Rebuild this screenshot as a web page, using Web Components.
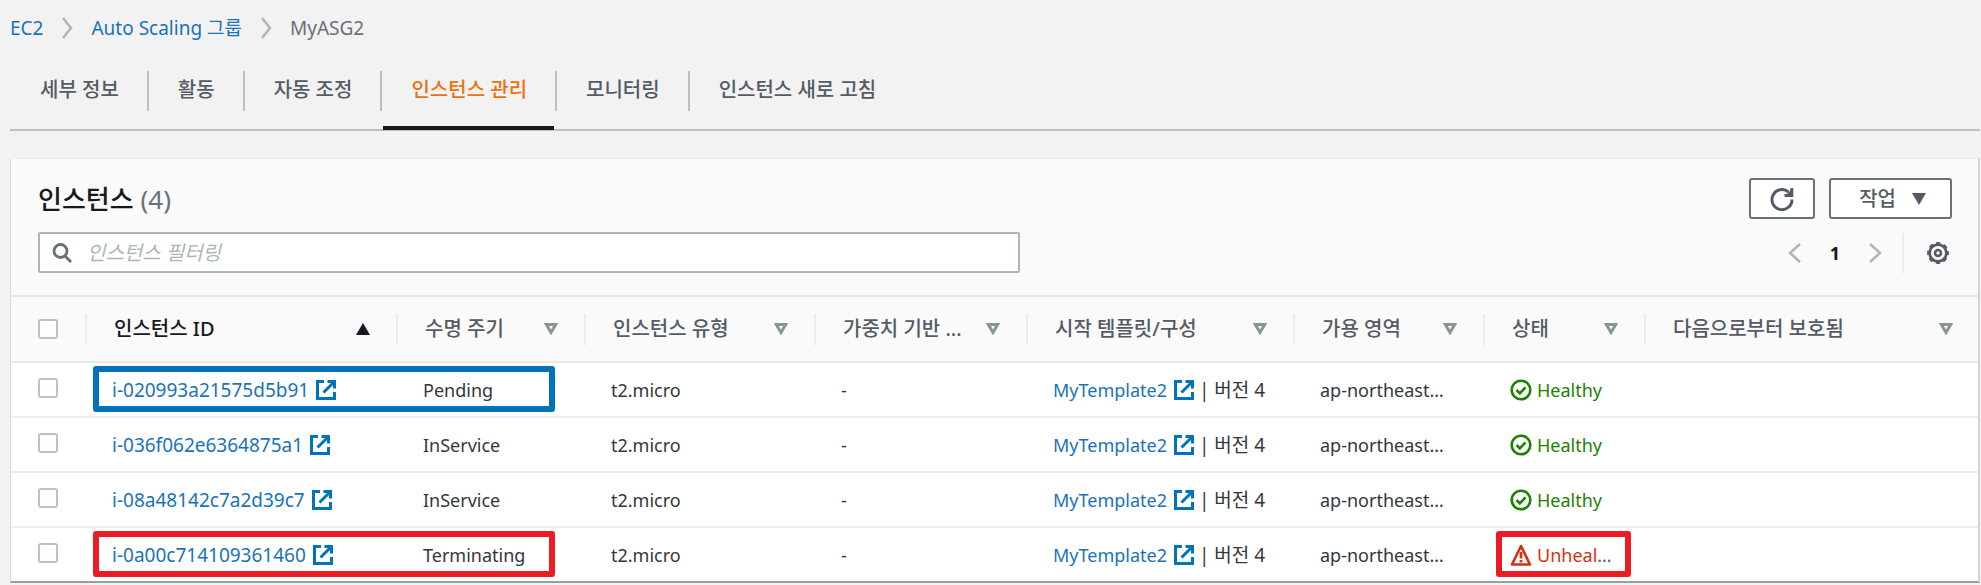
<!DOCTYPE html>
<html lang="ko">
<head>
  <meta charset="utf-8">
  <title>MyASG2 | EC2</title>
  <style>
    body {
      margin: 0;
      background: #f2f2f2;
      color: #33373c;
      font: 20px/28px "Noto Sans", "Noto Sans CJK KR", sans-serif;
      --link: #1a73b9;
      --muted: #545b64;
      --line: #eaeded;
      --edge: #aab7b8;
    }

    main {
      padding: 14px 1px 0 10px;
    }
  </style>

  <template id="crumbs.tpl">
    <style>
      :host { display: block; }
      nav { display: flex; align-items: center; gap: 18px; font-size: 19px; }
      ::slotted(a) { color: var(--link); text-decoration: none; }
      ::slotted(span) { color: #687078; }
      ::slotted(ui-icon) { color: var(--edge); }
    </style>
    <nav aria-label="breadcrumb"><slot></slot></nav>
  </template>

  <template id="tabs.tpl">
    <style>
      :host { display: block; margin-top: 18px; border-bottom: 2px solid #b9c2c3; }
      div { display: flex; padding-left: 1px; }
    </style>
    <div role="tablist"><slot></slot></div>
  </template>

  <template id="tab.tpl">
    <style>
      :host { display: flex; padding: 11px 0 0; }
      button {
        height: 59px;
        margin: 0 1px -1px 1px;
        padding: 0 27px 18px 28px;
        border: 0;
        border-bottom: 4px solid transparent;
        background: none;
        color: var(--muted);
        font: inherit;
        font-weight: 500;
        white-space: nowrap;
      }
      i { width: 2px; height: 40px; background: #b7c1c2; }
      :host([active]) button { color: #ec7211; border-bottom-color: #16191f; }
      :host([last]) i { display: none; }
    </style>
    <button role="tab"><slot></slot></button><i></i>
  </template>

  <template id="button.tpl">
    <style>
      :host { display: inline-flex; }
      button {
        display: flex;
        align-items: center;
        justify-content: center;
        gap: 16px;
        height: 41px;
        padding: 0 19px;
        border: 2px solid #687078;
        border-radius: 3px;
        background: #fff;
        color: var(--muted);
        font: inherit;
        font-weight: 500;
      }
      :host([wide]) button { padding: 0 24px 0 28px; }
      :host([plain]) button { height: 40px; padding: 0; border: 0; background: none; }
      :host([dim]) button { color: var(--edge); }
    </style>
    <button><slot></slot></button>
  </template>

  <template id="panel.tpl">
    <style>
      :host {
        display: block;
        margin-top: 27px;
        background: #fafafa;
        border: 1px solid #d9dddd;
        border-top-color: #eaeded;
        border-right: 2px solid #d0d5d6;
        border-bottom: 2px solid #95a0a1;
      }
      header { padding: 19px 26px 22px 27px; }
      .row { display: flex; align-items: center; justify-content: space-between; }
      .row + .row { margin-top: 13px; }
      h2 { margin: 0; color: #16191f; font-size: 26px; line-height: 36px; font-weight: 500; }
      h2 span { color: #687078; font-weight: 400; }
      .actions { display: flex; gap: 14px; }
      .search {
        display: flex;
        align-items: center;
        gap: 15px;
        box-sizing: border-box;
        width: 51.3%;
        height: 41px;
        padding: 0 12px;
        border: 2px solid #aab7b8;
        border-radius: 2px;
        background: #fff;
        color: #687078;
      }
      .search input { flex: 1; min-width: 0; padding: 0; border: 0; outline: 0; background: none; font: inherit; }
      .search input::placeholder { color: #aab7b8; font-style: italic; opacity: 1; }
      .pages { display: flex; align-items: center; }
      .pages b { width: 66px; text-align: center; color: #16191f; font-size: 18px; }
      .gear { display: flex; margin-left: 20px; padding: 0 3px 0 23px; border-left: 2px solid var(--line); }
    </style>
    <header>
      <div class="row">
        <h2>인스턴스 <span>(4)</span></h2>
        <div class="actions">
          <ui-button><ui-icon name="refresh"></ui-icon></ui-button>
          <ui-button wide>작업 <ui-icon name="caret"></ui-icon></ui-button>
        </div>
      </div>
      <div class="row">
        <label class="search">
          <ui-icon name="search"></ui-icon>
          <input type="text" placeholder="인스턴스 필터링" aria-label="인스턴스 필터링">
        </label>
        <div class="pages">
          <ui-button plain dim><ui-icon name="prev"></ui-icon></ui-button>
          <b>1</b>
          <ui-button plain dim><ui-icon name="next"></ui-icon></ui-button>
          <div class="gear"><ui-button plain><ui-icon name="gear"></ui-icon></ui-button></div>
        </div>
      </div>
    </header>
    <slot></slot>
  </template>

  <template id="table.tpl">
    <style>
      :host { display: block; }
      table { width: 100%; border-collapse: separate; border-spacing: 0; table-layout: fixed; }
      .c0 { width: 76px; }
      .c1 { width: 311px; }
      .c2 { width: 188px; }
      .c3 { width: 230px; }
      .c4 { width: 212px; }
      .c5 { width: 267px; }
      .c6 { width: 190px; }
      .c7 { width: 161px; }
      th { height: 64px; padding: 0; border: solid #e6e9e9; border-width: 2px 0; color: var(--muted); font-weight: 500; text-align: left; }
      th div { display: flex; align-items: center; justify-content: space-between; height: 31px; padding: 0 26px 0 27px; border-right: 2px solid var(--line); }
      th:last-child div { padding-right: 25px; border: 0; }
      th ui-icon { color: #879596; }
      th.sorted, th.sorted ui-icon { color: #16191f; }
      td { position: relative; height: 53px; padding: 0 0 0 25px; border-bottom: 2px solid var(--line); background: #fff; font-size: 18px; white-space: nowrap; }
      td.id, td.template { font-size: 19px; }
      td.template a { font-size: 18px; }
      tr:last-child td { border-bottom: 0; }
      th:first-child div, td:first-child { padding-left: 27px; }
      input { appearance: none; display: block; box-sizing: border-box; width: 20px; height: 20px; margin: 0; border: 2px solid #b9c3c4; border-radius: 3px; background: #fff; }
      td input { margin-bottom: 3px; }
      a { color: var(--link); text-decoration: none; }
      a ui-icon { margin-left: 7px; color: #0073bb; }
      .mark { position: absolute; z-index: 1; top: 3px; bottom: 4px; left: 6px; width: calc(100% + 151px); box-sizing: border-box; border: 6px solid #0073bb; border-radius: 3px; pointer-events: none; }
      .mark.red { border-color: #ed1c24; }
      .mark.small { left: 11px; right: 15px; width: auto; }
    </style>
    <table>
      <colgroup>
        <col class="c0"><col class="c1"><col class="c2"><col class="c3"><col class="c4"><col class="c5"><col class="c6"><col class="c7"><col>
      </colgroup>
      <thead><tr></tr></thead>
      <tbody></tbody>
    </table>
  </template>

  <template id="status.tpl">
    <style>
      :host { display: flex; align-items: center; gap: 5px; color: #1d8102; }
      :host([bad]) { color: #d13212; }
    </style>
    <ui-icon></ui-icon><span><slot></slot></span>
  </template>

  <script>
    const tpl = (name) => document.getElementById(name + ".tpl").content.cloneNode(true);

    const ICONS = {
      crumb: [12, 22, '<path d="M2 1l8 10-8 10" fill="none" stroke="currentColor" stroke-width="2.5"/>'],
      prev: [14, 20, '<path d="M12 1L2 10l10 9" fill="none" stroke="currentColor" stroke-width="2.5"/>'],
      next: [14, 20, '<path d="M2 1l10 9-10 9" fill="none" stroke="currentColor" stroke-width="2.5"/>'],
      search: [20, 20, '<g fill="none" stroke="currentColor" stroke-width="2.8"><circle cx="8.5" cy="8" r="6.5"/><path d="M13 13l6 6"/></g>'],
      refresh: [24, 24, '<path d="M22 12.5A10 10 0 1 1 18.5 5" fill="none" stroke="currentColor" stroke-width="3"/><path d="M21.8 1v7.5H14.5" fill="none" stroke="currentColor" stroke-width="3"/><path d="M22 2v6h-6z" fill="currentColor"/>'],
      caret: [14, 12, '<path d="M0 0h14L7 12z" fill="currentColor"/>'],
      asc: [14, 12, '<path d="M7 0l7 12H0z" fill="currentColor"/>'],
      sort: [14, 12, '<path d="M2.3 1.5h9.4L7 9.5z" fill="none" stroke="currentColor" stroke-width="3"/>'],
      gear: [22, 22, '<circle cx="11" cy="11" r="8.4" fill="none" stroke="currentColor" stroke-width="2.8"/><circle cx="11" cy="11" r="9.9" fill="none" stroke="currentColor" stroke-width="2" stroke-dasharray="4.4 3.375" stroke-dashoffset="2.2"/><circle cx="11" cy="11" r="3" fill="none" stroke="currentColor" stroke-width="2.6"/>'],
      external: [20, 20, '<path d="M8 1.5H1.5v17h17V12M11.5 1.5h7V8.5M18 2L7.5 12.5" fill="none" stroke="currentColor" stroke-width="3"/><path d="M13 1h6v6z" fill="currentColor"/>'],
      ok: [22, 22, '<circle cx="11" cy="11" r="9.3" fill="none" stroke="currentColor" stroke-width="2.6"/><path d="M6.5 11l3.3 3.3 5.7-6" fill="none" stroke="currentColor" stroke-width="2.6"/>'],
      warn: [22, 22, '<path d="M11 2L20 20.5H2z" fill="none" stroke="currentColor" stroke-width="2.6" stroke-linejoin="round"/><path d="M11 8v6.5M11 16v2.5" stroke="currentColor" stroke-width="2.8"/>']
    };

    class UiIcon extends HTMLElement {
      connectedCallback() {
        if (this.shadowRoot) return;
        const [w, h, body] = ICONS[this.getAttribute("name")];
        this.attachShadow({ mode: "open" }).innerHTML = `
          <style>
            :host { display: inline-block; flex: none; vertical-align: -3px; line-height: 0; }
            svg { display: block; }
          </style>
          <svg width="${w}" height="${h}" viewBox="0 0 ${w} ${h}" aria-hidden="true">${body}</svg>`;
      }
    }

    // plain wrappers which only need their template
    const simple = (tag, name) => customElements.define(tag, class extends HTMLElement {
      constructor() {
        super();
        this.attachShadow({ mode: "open" }).appendChild(tpl(name));
      }
    });

    class UiStatus extends HTMLElement {
      connectedCallback() {
        if (this.shadowRoot) return;
        const root = tpl("status");
        root.querySelector("ui-icon").setAttribute("name", this.hasAttribute("bad") ? "warn" : "ok");
        this.attachShadow({ mode: "open" }).appendChild(root);
      }
    }

    const COLUMNS = ["인스턴스 ID", "수명 주기", "인스턴스 유형", "가중치 기반 ...", "시작 템플릿/구성", "가용 영역", "상태", "다음으로부터 보호됨"];

    const INSTANCES = [
      { id: "i-020993a21575d5b91", state: "Pending", mark: "blue" },
      { id: "i-036f062e6364875a1", state: "InService" },
      { id: "i-08a48142c7a2d39c7", state: "InService" },
      { id: "i-0a00c714109361460", state: "Terminating", mark: "red", bad: true }
    ];

    class InstanceTable extends HTMLElement {
      constructor() {
        super();
        const root = this.attachShadow({ mode: "open" });
        root.appendChild(tpl("table"));
        root.querySelector("thead tr").innerHTML =
          `<th><div><input type="checkbox" aria-label="모두 선택"></div></th>` +
          COLUMNS.map((c, i) => `<th${i ? "" : ' class="sorted"'}><div>${c}<ui-icon name="${i ? "sort" : "asc"}"></ui-icon></div></th>`).join("");
        root.querySelector("tbody").innerHTML = INSTANCES.map((r) => this.row(r)).join("");
      }

      row(r) {
        const link = (text) => `<a href="#">${text}<ui-icon name="external"></ui-icon></a>`;
        return `<tr>
          <td><input type="checkbox" aria-label="${r.id}"></td>
          <td class="id">${link(r.id)}${r.mark ? `<span class="mark ${r.mark}"></span>` : ""}</td>
          <td>${r.state}</td>
          <td>t2.micro</td>
          <td>-</td>
          <td class="template">${link("MyTemplate2")} | 버전 4</td>
          <td>ap-northeast…</td>
          <td>${r.bad ? '<ui-status bad>Unheal<span style="color: #545b64">…</span></ui-status><span class="mark red small"></span>' : "<ui-status>Healthy</ui-status>"}</td>
          <td></td>
        </tr>`;
      }
    }

    window.addEventListener("DOMContentLoaded", () => {
      customElements.define("ui-icon", UiIcon);
      simple("ui-button", "button");
      simple("ui-crumbs", "crumbs");
      simple("ui-tabs", "tabs");
      simple("ui-tab", "tab");
      simple("instance-panel", "panel");
      customElements.define("ui-status", UiStatus);
      customElements.define("instance-table", InstanceTable);
    });
  </script>
</head>

<body>
  <main>
    <ui-crumbs>
      <a href="#">EC2</a>
      <ui-icon name="crumb"></ui-icon>
      <a href="#">Auto Scaling 그룹</a>
      <ui-icon name="crumb"></ui-icon>
      <span>MyASG2</span>
    </ui-crumbs>

    <ui-tabs>
      <ui-tab>세부 정보</ui-tab>
      <ui-tab>활동</ui-tab>
      <ui-tab>자동 조정</ui-tab>
      <ui-tab active>인스턴스 관리</ui-tab>
      <ui-tab>모니터링</ui-tab>
      <ui-tab last>인스턴스 새로 고침</ui-tab>
    </ui-tabs>

    <instance-panel>
      <instance-table></instance-table>
    </instance-panel>
  </main>
</body>

</html>
